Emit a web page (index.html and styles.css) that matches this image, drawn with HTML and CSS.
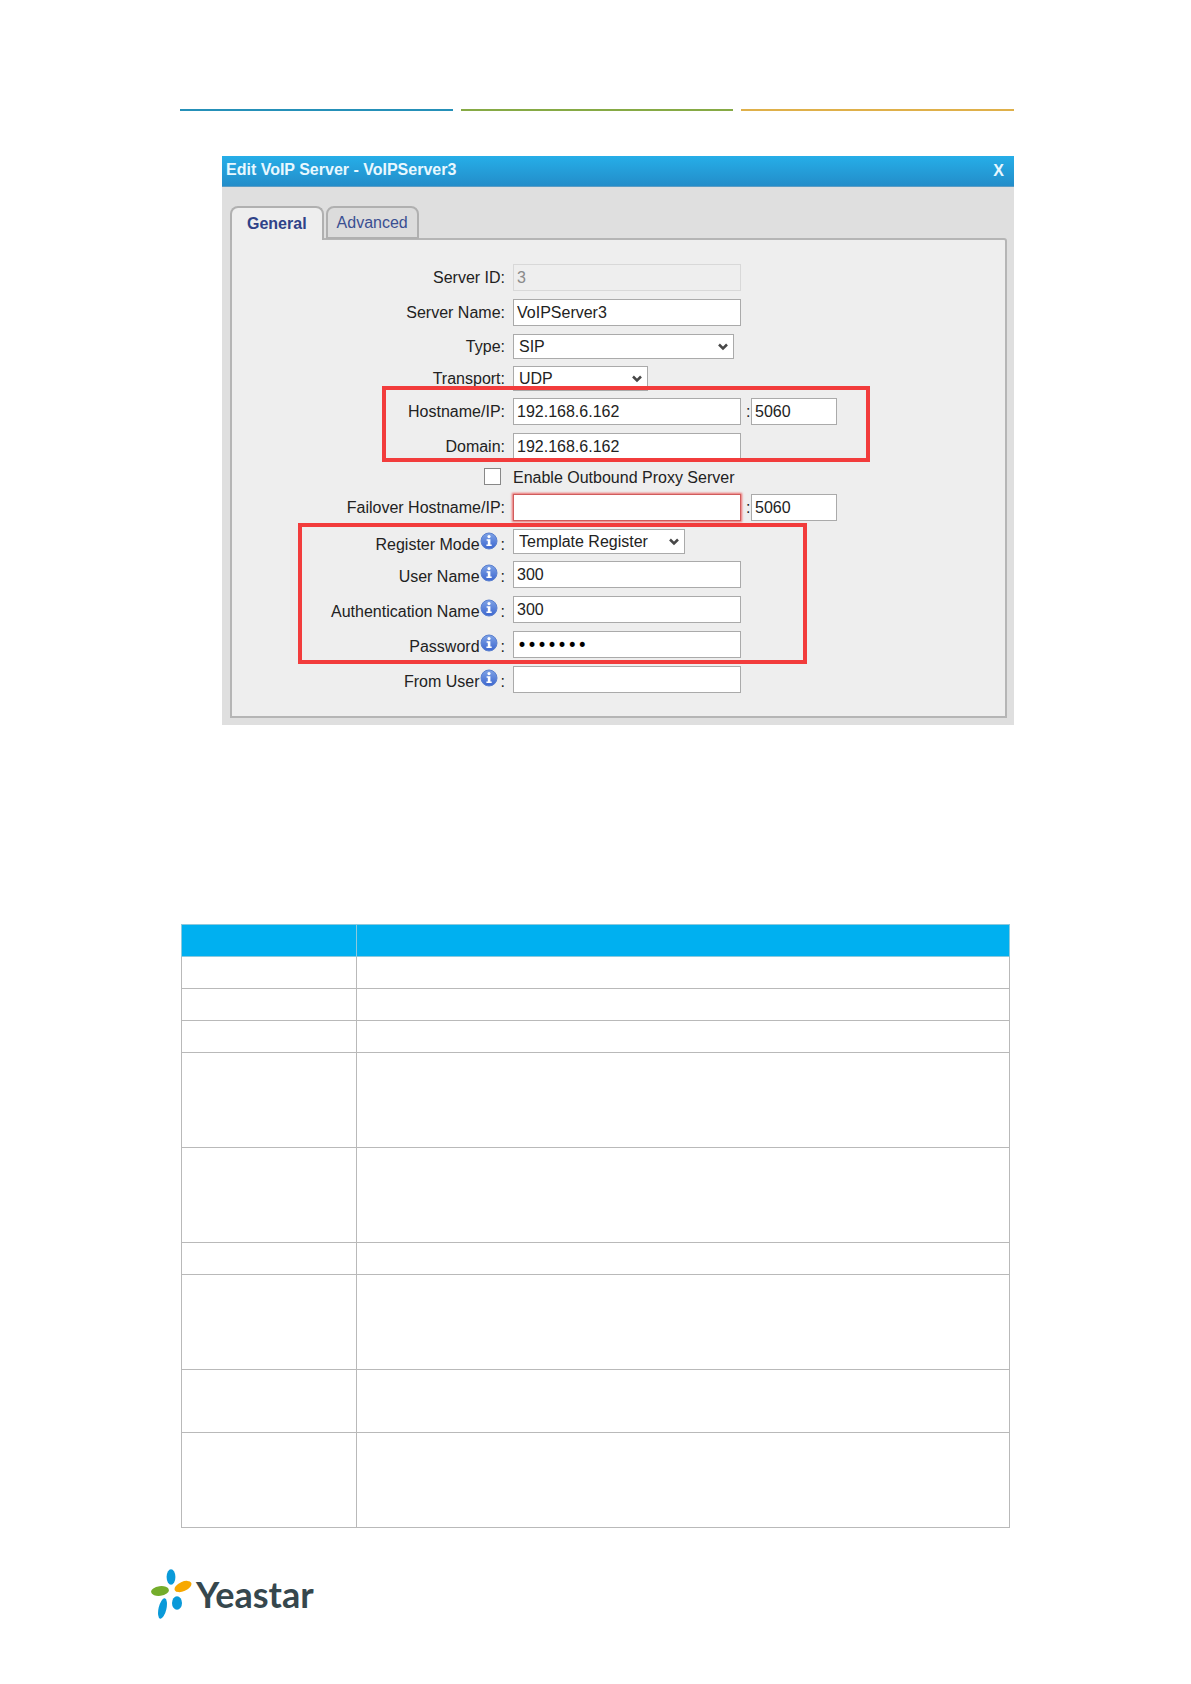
FILE: index.html
```html
<!DOCTYPE html>
<html lang="en">
<head>
  <meta charset="UTF-8">
  <title>Edit VoIP Server</title>
  <link rel="stylesheet" href="styles.css">
</head>
<body>
  <svg class="symbols" aria-hidden="true">
    <defs>
      <linearGradient id="info-fill" x1="0" y1="0" x2="0" y2="1">
        <stop offset="0" stop-color="#7fa3e6"/>
        <stop offset="1" stop-color="#3c66cf"/>
      </linearGradient>
      <symbol id="info" viewBox="0 0 18 18">
        <circle cx="9" cy="9" r="8" fill="url(#info-fill)" stroke="#5b80cf"/>
        <circle cx="9" cy="4.6" r="1.6" fill="#fff"/>
        <path d="M6.6 7.2h3.8v5.4h1.3v1.5H6.4v-1.5h1.4V8.7H6.6z" fill="#fff"/>
      </symbol>
    </defs>
  </svg>

  <header class="page-rule">
    <span class="rule blue"></span>
    <span class="rule green"></span>
    <span class="rule yellow"></span>
  </header>

  <main>
    <section class="dialog">
      <div class="dialog-header">
        <h2>Edit VoIP Server - VoIPServer3</h2>
        <button class="close" type="button">X</button>
      </div>
      <div class="dialog-body">
        <div class="tabs">
          <button class="tab active" type="button">General</button>
          <button class="tab" type="button">Advanced</button>
        </div>
        <form class="panel">
          <div class="row">
            <label for="server-id">Server ID:</label>
            <input type="text" id="server-id" value="3" disabled>
          </div>
          <div class="row">
            <label for="server-name">Server Name:</label>
            <input type="text" id="server-name" value="VoIPServer3">
          </div>
          <div class="row select-row">
            <label for="type">Type:</label>
            <select id="type" class="wide"><option>SIP</option></select>
          </div>
          <div class="row select-row">
            <label for="transport">Transport:</label>
            <select id="transport" class="narrow"><option>UDP</option></select>
          </div>
          <div class="highlight host">
            <div class="row">
              <label for="hostname">Hostname/IP:</label>
              <input type="text" id="hostname" value="192.168.6.162">
              <span class="colon">:</span>
              <input type="text" class="port" value="5060" aria-label="Port">
            </div>
            <div class="row">
              <label for="domain">Domain:</label>
              <input type="text" id="domain" value="192.168.6.162">
            </div>
          </div>
          <div class="row check-row">
            <span class="check-cell"><input type="checkbox" id="proxy"></span>
            <label class="check-label" for="proxy">Enable Outbound Proxy Server</label>
          </div>
          <div class="row">
            <label for="failover">Failover Hostname/IP:</label>
            <input type="text" id="failover" class="invalid">
            <span class="colon">:</span>
            <input type="text" class="port" value="5060" aria-label="Failover port">
          </div>
          <div class="highlight account">
            <div class="row select-row">
              <label class="with-info" for="register-mode">Register Mode<svg class="info"><use href="#info"/></svg>:</label>
              <select id="register-mode" class="medium"><option>Template Register</option></select>
            </div>
            <div class="row">
              <label class="with-info" for="user-name">User Name<svg class="info"><use href="#info"/></svg>:</label>
              <input type="text" id="user-name" value="300">
            </div>
            <div class="row">
              <label class="with-info" for="auth-name">Authentication Name<svg class="info"><use href="#info"/></svg>:</label>
              <input type="text" id="auth-name" value="300">
            </div>
            <div class="row">
              <label class="with-info" for="password">Password<svg class="info"><use href="#info"/></svg>:</label>
              <input type="password" id="password" value="yeastar">
            </div>
          </div>
          <div class="row">
            <label class="with-info" for="from-user">From User<svg class="info"><use href="#info"/></svg>:</label>
            <input type="text" id="from-user">
          </div>
        </form>
      </div>
    </section>

    <table class="options">
      <thead>
        <tr><th></th><th></th></tr>
      </thead>
      <tbody>
        <tr><td></td><td></td></tr>
        <tr><td></td><td></td></tr>
        <tr><td></td><td></td></tr>
        <tr class="lines-3"><td></td><td></td></tr>
        <tr class="lines-3"><td></td><td></td></tr>
        <tr><td></td><td></td></tr>
        <tr class="lines-3"><td></td><td></td></tr>
        <tr class="lines-2"><td></td><td></td></tr>
        <tr class="lines-3"><td></td><td></td></tr>
      </tbody>
    </table>
  </main>

  <footer class="brand">
    <svg class="mark" viewBox="0 0 42 50" aria-hidden="true">
      <ellipse cx="20" cy="8" rx="4.4" ry="7.7" fill="#0a9ad9"/>
      <ellipse cx="9" cy="22" rx="9" ry="4.8" fill="#74ad2b" transform="rotate(-7 9 22)"/>
      <ellipse cx="32" cy="17.5" rx="9" ry="4.7" fill="#f7a800" transform="rotate(-24 32 17.5)"/>
      <ellipse cx="26" cy="34" rx="5" ry="6.7" fill="#0a9ad9"/>
      <ellipse cx="11.5" cy="39.5" rx="3.9" ry="10.5" fill="#0a9ad9" transform="rotate(13 11.5 39.5)"/>
    </svg>
    <span class="brand-name">Yeastar</span>
  </footer>
</body>
</html>
```

FILE: styles.css
```css
*,
*::after {
  box-sizing: border-box;
}

body {
  margin: 0;
  padding: 109px 177px 0 180px;
  background: #fff;
  font-family: "Liberation Sans", Arial, sans-serif;
  font-size: 16px;
  color: #222;
}

.symbols {
  position: absolute;
  width: 0;
  height: 0;
}

/* coloured rule at the top of the page */
.page-rule {
  display: flex;
  gap: 8px;
}

.rule {
  flex: 1;
  height: 2px;
}

.blue { background: #2590b8; }
.green { background: #86aa45; }
.yellow { background: #dfb04a; }

/* dialog */
.dialog {
  margin: 45px 0 0 42px;
  background: #dfdfdf;
}

.dialog-header {
  display: flex;
  justify-content: space-between;
  height: 31px;
  padding: 0 10px 0 4px;
  background: linear-gradient(#26aee8, #238dc9);
  border-bottom: 1px solid #5b9cc4;
}

.dialog-header h2,
.close {
  margin: 0;
  padding: 0;
  border: none;
  background: none;
  font: bold 16px/28px "Liberation Sans", Arial, sans-serif;
  color: #e8f8ff;
}

.dialog-body {
  padding: 19px 7px 7px 8px;
}

.tabs {
  display: flex;
  align-items: flex-start;
  gap: 2px;
}

.tab {
  height: 33px;
  padding: 0 9px;
  border: 2px solid #b0b0b0;
  border-radius: 8px 8px 0 0;
  background: #dcdcdc;
  font: 16px/28px "Liberation Sans", Arial, sans-serif;
  color: #3a4f92;
}

.tab.active {
  z-index: 1;
  height: 34px;
  padding: 0 15px;
  border-bottom: none;
  background: #eee;
  font-weight: bold;
  color: #2f4288;
}

.panel {
  margin-top: -2px;
  padding: 24px 0 15px;
  background: #eee;
  border: 2px solid #b5b5b5;
  border-radius: 0 3px 0 0;
}

.row {
  display: flex;
  height: 35px;
}

.row label {
  width: 273px;
  margin-right: 8px;
  line-height: 28px;
  text-align: right;
}

.row .with-info {
  display: flex;
  justify-content: flex-end;
  line-height: 32px;
}

.info {
  width: 18px;
  height: 18px;
  margin: 3px 3px 0 0;
}

.select-row {
  height: 32px;
}

input[type="text"],
input[type="password"],
select {
  width: 228px;
  height: 27px;
  padding: 0 3px;
  border: 1px solid #aaa;
  border-radius: 0;
  background: #fff;
  font: 16px "Liberation Sans", Arial, sans-serif;
  color: #222;
}

input[type="text"]:disabled {
  background: #eee;
  border-color: #d8d8d8;
  color: #8a8a8a;
}

input[type="password"] {
  font-family: "DejaVu Sans", sans-serif;
  font-size: 17px;
  color: #000;
}

select {
  appearance: none;
  height: 25px;
  padding: 0 5px;
  background: #fff url("data:image/svg+xml,%3Csvg xmlns='http://www.w3.org/2000/svg' width='10' height='8'%3E%3Cpath d='M1 1.5L5 5.5L9 1.5' fill='none' stroke='%23484848' stroke-width='2.5'/%3E%3C/svg%3E") no-repeat right 5px center;
}

.select-row label {
  line-height: 25px;
}

.wide { width: 221px; }
.narrow { width: 135px; }
.medium { width: 172px; }

.colon {
  width: 10px;
  padding-left: 5px;
  line-height: 28px;
}

input.port {
  width: 86px;
}

input.invalid {
  border-color: #cf5c5c;
  box-shadow: 0 0 2px 1px #ee6a6a;
}

.check-row {
  height: 26px;
}

.check-cell {
  width: 273px;
  margin-right: 8px;
  padding-right: 4px;
  line-height: 16px;
  text-align: right;
}

.row .check-label {
  width: auto;
  line-height: 20px;
}

input[type="checkbox"] {
  appearance: none;
  width: 17px;
  height: 17px;
  margin: 0;
  border: 1px solid #888;
  background: #fff;
}

/* red frames drawn over the form */
.highlight {
  position: relative;
}

.highlight::after {
  content: "";
  position: absolute;
  border: 4px solid #f23c3c;
  pointer-events: none;
}

.host::after {
  top: -12px;
  left: 150px;
  width: 488px;
  height: 76px;
}

.account::after {
  top: -6px;
  left: 66px;
  width: 509px;
  height: 141px;
}

/* options table */
.options {
  width: calc(100% - 5px);
  margin: 199px 0 0 1px;
  border-collapse: collapse;
  table-layout: fixed;
}

.options th,
.options td {
  height: 32px;
  padding: 0;
  border: 1px solid #b9b9b9;
}

.options th {
  background: #00b0f0;
  border-color: #8cc9dd;
}

.options th:first-child {
  width: 175px;
}

.options .lines-2 td { height: 63px; }
.options .lines-3 td { height: 95px; }

/* footer logo */
.brand {
  display: flex;
  gap: 3px;
  margin: 41px 0 0 -29px;
}

.mark {
  width: 42px;
  height: 50px;
}

.brand-name {
  font: bold 36px/50px Lato, sans-serif;
  color: #36474d;
}
```
